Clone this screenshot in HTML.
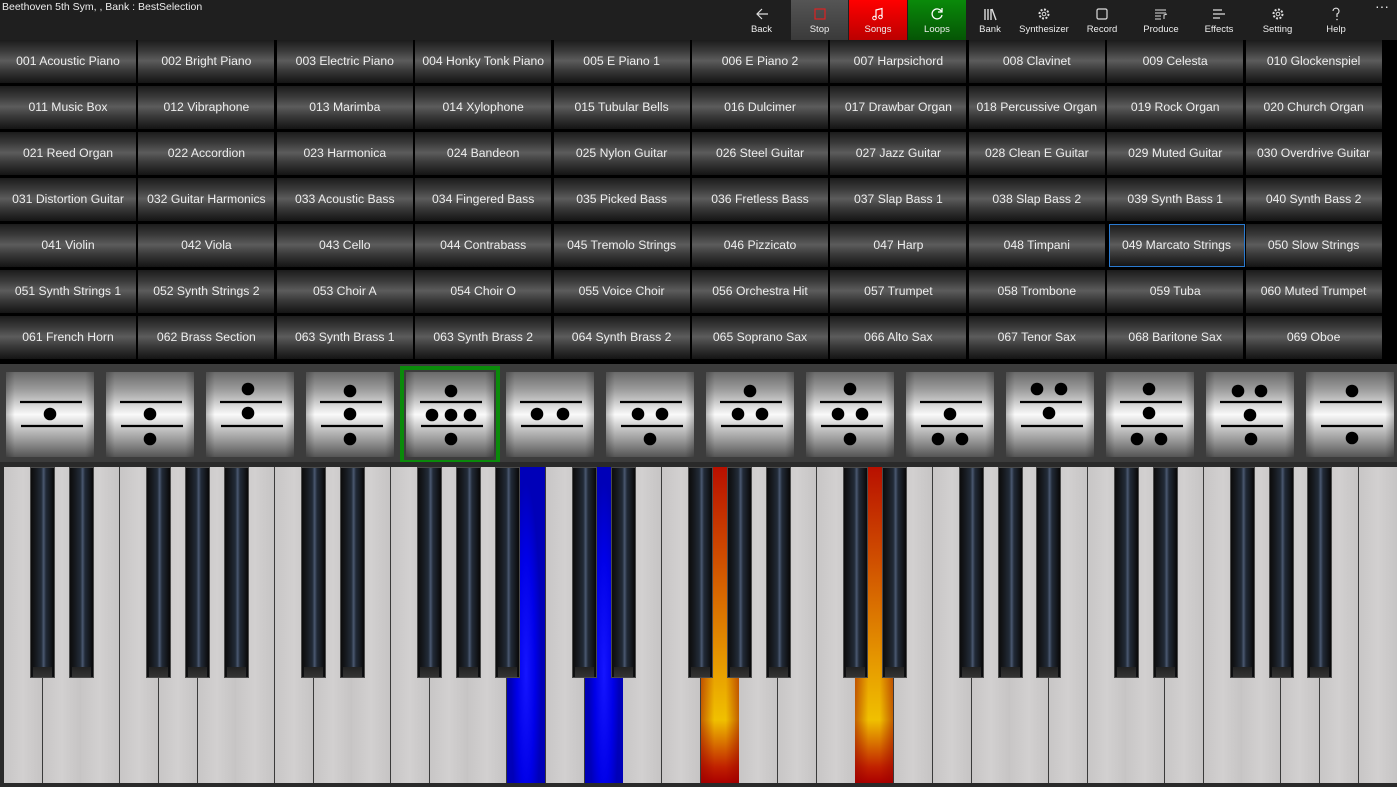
<!DOCTYPE html>
<html><head><meta charset="utf-8">
<style>
*{margin:0;padding:0;box-sizing:border-box}
body{width:1397px;height:787px;background:#000;position:relative;overflow:hidden;font-family:"Liberation Sans",sans-serif}
#bar{position:absolute;left:0;top:0;width:1397px;height:40px;background:#1f1f1f}
#title{position:absolute;left:2px;top:1px;color:#eee;font-size:10.5px}
.tb{position:absolute;top:0;height:40px;color:#eee;font-size:9.5px;text-align:center}
.tb span{position:absolute;left:0;right:0;top:24px}
.tb svg{position:absolute;left:50%;top:7px;margin-left:-7px}
#grid{position:absolute;left:0;top:40px;width:1384px}
.c{position:absolute;height:43px;width:136px;color:#eee;font-size:12.2px;line-height:43px;text-align:center;white-space:nowrap;
background:linear-gradient(180deg,#1c1c1c 0%,#3a3a3a 25%,#5c5c5c 48%,#3a3a3a 70%,#141414 100%)}
.sel{border:1.5px solid #2a7ad0;line-height:40px}
#keys{position:absolute;left:0;top:462px;width:1397px;height:325px;background:#2a2a2a}
.w{position:absolute;top:5px;height:316px;width:39px;background:linear-gradient(90deg,#c8c6c6,#d2d0d0 50%,#c6c4c4);border-right:1.5px solid #3a3a3a}
.b{position:absolute;top:5px;width:25px;height:211px;border:1px solid #4a4a4a;
background:linear-gradient(90deg,#0c0c0c 0%,#15181d 20%,#222b38 45%,#4a5870 55%,#222b38 65%,#101216 90%,#080808 100%)}
.b:after{content:"";position:absolute;left:2px;right:2px;bottom:0;height:10px;background:linear-gradient(180deg,#222,#333)}
.blue{background:radial-gradient(ellipse 40% 60% at 50% 65%,#1515ff,#0000e8 60%,#0000b8)}
.org{background:linear-gradient(90deg,rgba(150,0,0,.5),rgba(0,0,0,0) 35%,rgba(0,0,0,0) 65%,rgba(150,0,0,.5)),linear-gradient(180deg,#b81000 0%,#d05000 30%,#e8a000 65%,#f0c000 80%,#c02000 95%,#a00 100%)}
</style></head><body>
<div id="bar">
<div id="title">Beethoven 5th Sym, , Bank : BestSelection</div>
<div class="tb" style="left:733px;width:57px"><svg width="14" height="14" viewBox="0 0 14 14"><path d="M13 7H2M7 2L2 7l5 5" stroke="#ddd" fill="none" stroke-width="1.2"/></svg><span>Back</span></div>
<div class="tb" style="left:791px;width:57px;background:linear-gradient(180deg,#555,#3a3a3a)"><svg width="14" height="14"><rect x="2" y="2" width="10" height="10" stroke="#d22" fill="none" stroke-width="1.2"/></svg><span>Stop</span></div>
<div class="tb" style="left:849px;width:58px;background:linear-gradient(180deg,#f00,#b00)"><svg width="14" height="14"><path d="M5 11V3l6-1.5V10" stroke="#fff" fill="none" stroke-width="1.2"/><circle cx="3.5" cy="11" r="1.8" stroke="#fff" fill="none"/><circle cx="9.5" cy="10" r="1.8" stroke="#fff" fill="none"/></svg><span>Songs</span></div>
<div class="tb" style="left:908px;width:58px;background:linear-gradient(180deg,#0a8a0a,#055505)"><svg width="14" height="14"><path d="M11.5 4.5A5 5 0 1 0 12 8" stroke="#fff" fill="none" stroke-width="1.3"/><path d="M12 1v4H8" stroke="#fff" fill="none" stroke-width="1.3"/></svg><span>Loops</span></div>
<div class="tb" style="left:966px;width:48px"><svg width="14" height="14"><path d="M2 2v11M5 2v11M8 2v11M9 2l4 11" stroke="#ddd" stroke-width="1.4" fill="none"/></svg><span>Bank</span></div>
<div class="tb" style="left:1014px;width:60px"><svg width="14" height="14"><circle cx="7" cy="7" r="4.5" stroke="#ddd" fill="none" stroke-width="2" stroke-dasharray="2 1.5"/><circle cx="7" cy="7" r="1.8" stroke="#ddd" fill="none"/></svg><span>Synthesizer</span></div>
<div class="tb" style="left:1076px;width:52px"><svg width="14" height="14"><rect x="2" y="2" width="10" height="10" rx="1.5" stroke="#ddd" fill="none" stroke-width="1.2"/></svg><span>Record</span></div>
<div class="tb" style="left:1133px;width:56px"><svg width="14" height="14"><path d="M1 3h11M1 6h11M1 9h6M1 12h6" stroke="#ddd" stroke-width="1.1"/><path d="M10 12V8l3-1" stroke="#ddd" fill="none"/></svg><span>Produce</span></div>
<div class="tb" style="left:1193px;width:52px"><svg width="14" height="14"><path d="M1 3h9M1 7h12M1 11h7" stroke="#ddd" stroke-width="1.2"/></svg><span>Effects</span></div>
<div class="tb" style="left:1250px;width:55px"><svg width="14" height="14"><circle cx="7" cy="7" r="4.5" stroke="#ddd" fill="none" stroke-width="2" stroke-dasharray="2 1.5"/><circle cx="7" cy="7" r="1.8" stroke="#ddd" fill="none"/></svg><span>Setting</span></div>
<div class="tb" style="left:1311px;width:50px"><svg width="14" height="14"><path d="M4 4a3 3 0 1 1 4 3v3" stroke="#ddd" fill="none" stroke-width="1.2"/><circle cx="8" cy="12.5" r=".8" fill="#ddd"/></svg><span>Help</span></div>
<div class="tb" style="left:1370px;width:24px;font-size:14px;top:-2px">···</div>
</div>

<div id="grid">
<div class="c" style="left:0;top:0">001 Acoustic Piano</div><div class="c" style="left:138.4px;top:0">002 Bright Piano</div><div class="c" style="left:276.8px;top:0">003 Electric Piano</div><div class="c" style="left:415.2px;top:0">004 Honky Tonk Piano</div><div class="c" style="left:553.6px;top:0">005 E Piano 1</div><div class="c" style="left:692px;top:0">006 E Piano 2</div><div class="c" style="left:830.4px;top:0">007 Harpsichord</div><div class="c" style="left:968.8px;top:0">008 Clavinet</div><div class="c" style="left:1107.2px;top:0">009 Celesta</div><div class="c" style="left:1245.6px;top:0">010 Glockenspiel</div>
<div class="c" style="left:0;top:46px">011 Music Box</div><div class="c" style="left:138.4px;top:46px">012 Vibraphone</div><div class="c" style="left:276.8px;top:46px">013 Marimba</div><div class="c" style="left:415.2px;top:46px">014 Xylophone</div><div class="c" style="left:553.6px;top:46px">015 Tubular Bells</div><div class="c" style="left:692px;top:46px">016 Dulcimer</div><div class="c" style="left:830.4px;top:46px">017 Drawbar Organ</div><div class="c" style="left:968.8px;top:46px">018 Percussive Organ</div><div class="c" style="left:1107.2px;top:46px">019 Rock Organ</div><div class="c" style="left:1245.6px;top:46px">020 Church Organ</div>
<div class="c" style="left:0;top:92px">021 Reed Organ</div><div class="c" style="left:138.4px;top:92px">022 Accordion</div><div class="c" style="left:276.8px;top:92px">023 Harmonica</div><div class="c" style="left:415.2px;top:92px">024 Bandeon</div><div class="c" style="left:553.6px;top:92px">025 Nylon Guitar</div><div class="c" style="left:692px;top:92px">026 Steel Guitar</div><div class="c" style="left:830.4px;top:92px">027 Jazz Guitar</div><div class="c" style="left:968.8px;top:92px">028 Clean E Guitar</div><div class="c" style="left:1107.2px;top:92px">029 Muted Guitar</div><div class="c" style="left:1245.6px;top:92px">030 Overdrive Guitar</div>
<div class="c" style="left:0;top:138px">031 Distortion Guitar</div><div class="c" style="left:138.4px;top:138px">032 Guitar Harmonics</div><div class="c" style="left:276.8px;top:138px">033 Acoustic Bass</div><div class="c" style="left:415.2px;top:138px">034 Fingered Bass</div><div class="c" style="left:553.6px;top:138px">035 Picked Bass</div><div class="c" style="left:692px;top:138px">036 Fretless Bass</div><div class="c" style="left:830.4px;top:138px">037 Slap Bass 1</div><div class="c" style="left:968.8px;top:138px">038 Slap Bass 2</div><div class="c" style="left:1107.2px;top:138px">039 Synth Bass 1</div><div class="c" style="left:1245.6px;top:138px">040 Synth Bass 2</div>
<div class="c" style="left:0;top:184px">041 Violin</div><div class="c" style="left:138.4px;top:184px">042 Viola</div><div class="c" style="left:276.8px;top:184px">043 Cello</div><div class="c" style="left:415.2px;top:184px">044 Contrabass</div><div class="c" style="left:553.6px;top:184px">045 Tremolo Strings</div><div class="c" style="left:692px;top:184px">046 Pizzicato</div><div class="c" style="left:830.4px;top:184px">047 Harp</div><div class="c" style="left:968.8px;top:184px">048 Timpani</div><div class="c sel" style="left:1108.5px;top:184px">049 Marcato Strings</div><div class="c" style="left:1245.6px;top:184px">050 Slow Strings</div>
<div class="c" style="left:0;top:230px">051 Synth Strings 1</div><div class="c" style="left:138.4px;top:230px">052 Synth Strings 2</div><div class="c" style="left:276.8px;top:230px">053 Choir A</div><div class="c" style="left:415.2px;top:230px">054 Choir O</div><div class="c" style="left:553.6px;top:230px">055 Voice Choir</div><div class="c" style="left:692px;top:230px">056 Orchestra Hit</div><div class="c" style="left:830.4px;top:230px">057 Trumpet</div><div class="c" style="left:968.8px;top:230px">058 Trombone</div><div class="c" style="left:1107.2px;top:230px">059 Tuba</div><div class="c" style="left:1245.6px;top:230px">060 Muted Trumpet</div>
<div class="c" style="left:0;top:276px">061 French Horn</div><div class="c" style="left:138.4px;top:276px">062 Brass Section</div><div class="c" style="left:276.8px;top:276px">063 Synth Brass 1</div><div class="c" style="left:415.2px;top:276px">063 Synth Brass 2</div><div class="c" style="left:553.6px;top:276px">064 Synth Brass 2</div><div class="c" style="left:692px;top:276px">065 Soprano Sax</div><div class="c" style="left:830.4px;top:276px">066 Alto Sax</div><div class="c" style="left:968.8px;top:276px">067 Tenor Sax</div><div class="c" style="left:1107.2px;top:276px">068 Baritone Sax</div><div class="c" style="left:1245.6px;top:276px">069 Oboe</div>
</div>

<svg style="position:absolute;left:0;top:362px" width="1397" height="101" viewBox="0 362 1397 101">
<defs>
<linearGradient id="s" x1="0" y1="0" x2="0" y2="1"><stop offset="0" stop-color="#6a6a6a"/><stop offset=".2" stop-color="#9a9a9a"/><stop offset=".5" stop-color="#fafafa"/><stop offset=".8" stop-color="#9a9a9a"/><stop offset="1" stop-color="#555"/></linearGradient>
<linearGradient id="e" x1="0" y1="0" x2="1" y2="0"><stop offset="0" stop-color="#000" stop-opacity=".25"/><stop offset=".1" stop-color="#000" stop-opacity="0"/><stop offset=".9" stop-color="#000" stop-opacity="0"/><stop offset="1" stop-color="#000" stop-opacity=".25"/></linearGradient>
<g id="cell"><rect x="0" y="372" width="88" height="85" fill="url(#s)"/><rect x="0" y="372" width="88" height="85" fill="url(#e)"/><path d="M14 402H76M15 426H77" stroke="#000" stroke-width="2.2"/></g>
</defs>
<rect x="0" y="364" width="1397" height="99" fill="#3c3c3c"/>
<g fill="#000">
<g transform="translate(6 0)"><use href="#cell"/><circle cx="44" cy="414" r="6.3"/></g>
<g transform="translate(106 0)"><use href="#cell"/><circle cx="44" cy="414" r="6.3"/><circle cx="44" cy="439" r="6.3"/></g>
<g transform="translate(206 0)"><use href="#cell"/><circle cx="42" cy="389" r="6.3"/><circle cx="42" cy="413" r="6.3"/></g>
<g transform="translate(306 0)"><use href="#cell"/><circle cx="44" cy="391" r="6.3"/><circle cx="44" cy="414" r="6.3"/><circle cx="44" cy="439" r="6.3"/></g>
<rect x="402" y="368" width="96" height="94" fill="none" stroke="#0a8a0a" stroke-width="4"/>
<g transform="translate(406 0)"><use href="#cell"/><circle cx="45" cy="391" r="6.3"/><circle cx="26" cy="415" r="6.3"/><circle cx="45" cy="415" r="6.3"/><circle cx="64" cy="415" r="6.3"/><circle cx="45" cy="439" r="6.3"/></g>
<g transform="translate(506 0)"><use href="#cell"/><circle cx="31" cy="414" r="6.3"/><circle cx="57" cy="414" r="6.3"/></g>
<g transform="translate(606 0)"><use href="#cell"/><circle cx="32" cy="414" r="6.3"/><circle cx="56" cy="414" r="6.3"/><circle cx="44" cy="439" r="6.3"/></g>
<g transform="translate(706 0)"><use href="#cell"/><circle cx="44" cy="391" r="6.3"/><circle cx="32" cy="414" r="6.3"/><circle cx="56" cy="414" r="6.3"/></g>
<g transform="translate(806 0)"><use href="#cell"/><circle cx="44" cy="389" r="6.3"/><circle cx="32" cy="414" r="6.3"/><circle cx="56" cy="414" r="6.3"/><circle cx="44" cy="439" r="6.3"/></g>
<g transform="translate(906 0)"><use href="#cell"/><circle cx="44" cy="414" r="6.3"/><circle cx="32" cy="439" r="6.3"/><circle cx="56" cy="439" r="6.3"/></g>
<g transform="translate(1006 0)"><use href="#cell"/><circle cx="31" cy="389" r="6.3"/><circle cx="55" cy="389" r="6.3"/><circle cx="43" cy="413" r="6.3"/></g>
<g transform="translate(1106 0)"><use href="#cell"/><circle cx="43" cy="389" r="6.3"/><circle cx="43" cy="413" r="6.3"/><circle cx="31" cy="439" r="6.3"/><circle cx="55" cy="439" r="6.3"/></g>
<g transform="translate(1206 0)"><use href="#cell"/><circle cx="32" cy="391" r="6.3"/><circle cx="55" cy="391" r="6.3"/><circle cx="44" cy="415" r="6.3"/><circle cx="45" cy="439" r="6.3"/></g>
<g transform="translate(1306 0)"><use href="#cell"/><circle cx="46" cy="391" r="6.3"/><circle cx="46" cy="438" r="6.3"/></g>
</g>
</svg>

<div id="keys">
<div class="w" style="left:4px"></div><div class="w" style="left:42.7px"></div><div class="w" style="left:81.4px"></div><div class="w" style="left:120.1px"></div><div class="w" style="left:158.8px"></div><div class="w" style="left:197.5px"></div><div class="w" style="left:236.2px"></div><div class="w" style="left:274.9px"></div><div class="w" style="left:313.6px"></div><div class="w" style="left:352.3px"></div><div class="w" style="left:391px"></div><div class="w" style="left:429.7px"></div><div class="w" style="left:468.4px"></div><div class="w blue" style="left:507.1px"></div><div class="w" style="left:545.8px"></div><div class="w blue" style="left:584.5px"></div><div class="w" style="left:623.2px"></div><div class="w" style="left:661.9px"></div><div class="w org" style="left:700.6px"></div><div class="w" style="left:739.3px"></div><div class="w" style="left:778px"></div><div class="w" style="left:816.7px"></div><div class="w org" style="left:855.4px"></div><div class="w" style="left:894.1px"></div><div class="w" style="left:932.8px"></div><div class="w" style="left:971.5px"></div><div class="w" style="left:1010.2px"></div><div class="w" style="left:1048.9px"></div><div class="w" style="left:1087.6px"></div><div class="w" style="left:1126.3px"></div><div class="w" style="left:1165px"></div><div class="w" style="left:1203.7px"></div><div class="w" style="left:1242.4px"></div><div class="w" style="left:1281.1px"></div><div class="w" style="left:1319.8px"></div><div class="w" style="left:1358.5px;width:39px"></div>
<div class="b" style="left:30.2px"></div><div class="b" style="left:68.9px"></div><div class="b" style="left:146.3px"></div><div class="b" style="left:185px"></div><div class="b" style="left:223.7px"></div><div class="b" style="left:301.1px"></div><div class="b" style="left:339.8px"></div><div class="b" style="left:417.2px"></div><div class="b" style="left:455.9px"></div><div class="b" style="left:494.6px"></div><div class="b" style="left:572px"></div><div class="b" style="left:610.7px"></div><div class="b" style="left:688.1px"></div><div class="b" style="left:726.8px"></div><div class="b" style="left:765.5px"></div><div class="b" style="left:842.9px"></div><div class="b" style="left:881.6px"></div><div class="b" style="left:959px"></div><div class="b" style="left:997.7px"></div><div class="b" style="left:1036.4px"></div><div class="b" style="left:1113.8px"></div><div class="b" style="left:1152.5px"></div><div class="b" style="left:1229.9px"></div><div class="b" style="left:1268.6px"></div><div class="b" style="left:1307.3px"></div>
</div>
</body></html>
